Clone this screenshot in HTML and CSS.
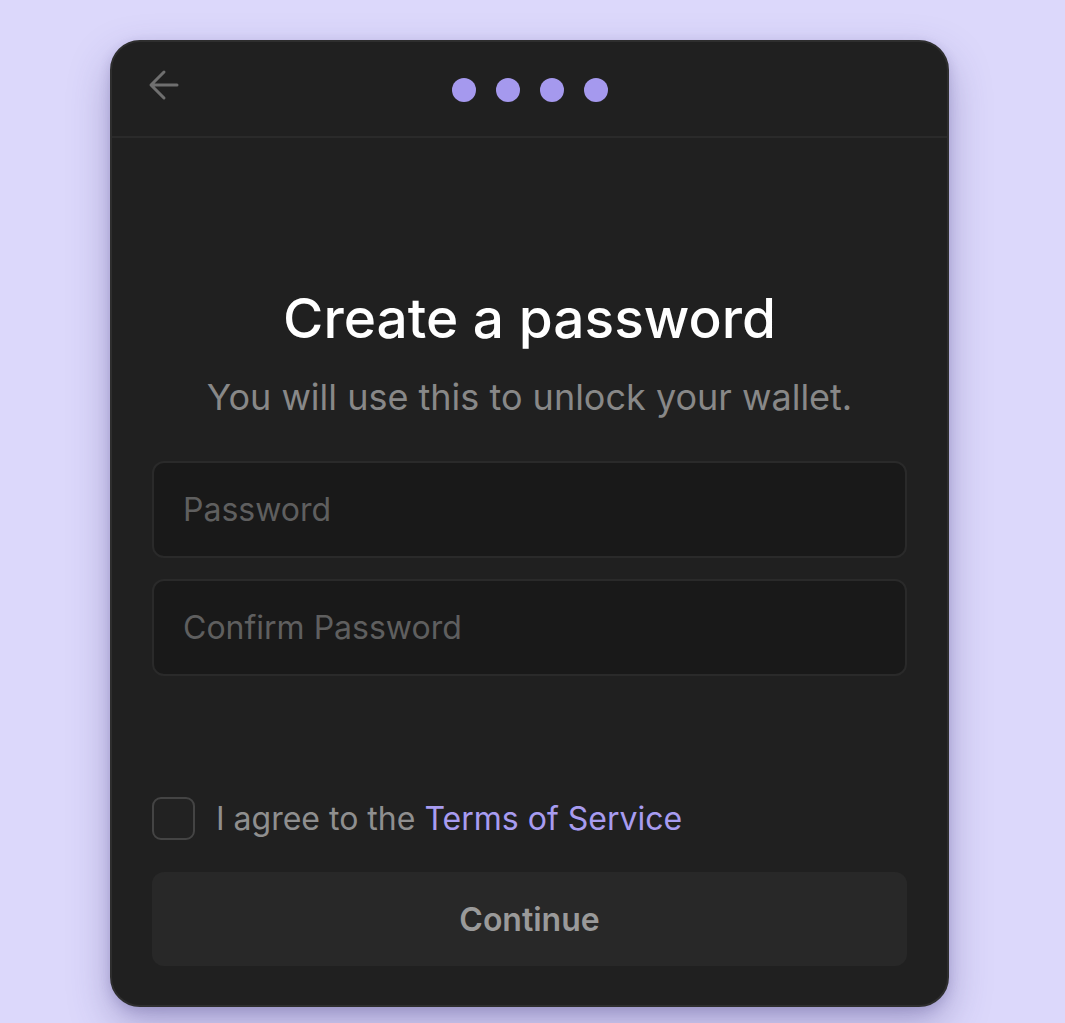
FILE: index.html
```html
<!DOCTYPE html>
<html lang="en">
<head>
<meta charset="utf-8">
<title>Create a password</title>
<link rel="stylesheet" href="styles.css">
</head>
<body>
<div class="card">
  <div class="header">
    <button class="back" aria-label="Back">
      <svg width="32" height="32" viewBox="0 0 32 32" fill="none" stroke="currentColor" stroke-width="3" stroke-linecap="round" stroke-linejoin="round">
        <path d="M29 16H3.5M16 3L3 16L16 29"/>
      </svg>
    </button>
    <div class="dots">
      <span class="dot"></span><span class="dot"></span><span class="dot"></span><span class="dot"></span>
    </div>
  </div>
  <div class="content">
    <h1 class="title">Create a password</h1>
    <p class="subtitle">You will use this to unlock your wallet.</p>
    <div class="fields">
      <input class="field" type="password" placeholder="Password">
      <input class="field" type="password" placeholder="Confirm Password">
    </div>
    <div class="footer">
      <label class="agree">
        <span class="checkbox"></span>
        <span class="agree-text">I agree to the <a class="link" href="#">Terms of Service</a></span>
      </label>
      <button class="continue">Continue</button>
    </div>
  </div>
</div>
</body>
</html>
```

FILE: styles.css
```css
* { box-sizing: border-box; }
html, body { margin: 0; padding: 0; }
body {
  background: #dcd8fb;
  font-family: Inter, "Noto Sans", sans-serif;
  width: 1065px;
  height: 1023px;
  overflow: hidden;
  padding: 40px 0 0 110px;
}
.card {
  width: 839px;
  height: 967px;
  background: #202020;
  border: 2px solid #2e2e2e;
  border-radius: 30px;
  box-shadow: 0 18px 40px rgba(70, 60, 130, 0.35), 0 4px 12px rgba(70, 60, 130, 0.2);
  display: flex;
  flex-direction: column;
  overflow: hidden;
}
.header {
  position: relative;
  height: 96px;
  border-bottom: 2px solid #2a2a2a;
  display: flex;
  align-items: center;
  justify-content: center;
  flex-shrink: 0;
}
.back {
  position: absolute;
  left: 36px;
  top: 27px;
  width: 32px;
  height: 32px;
  padding: 0;
  border: 0;
  background: none;
  color: #6f6f6f;
  display: flex;
}
.dots {
  display: flex;
  gap: 20px;
  margin-top: 2px;
}
.dot {
  width: 24px;
  height: 24px;
  border-radius: 50%;
  background: #a599ee;
}
.content {
  flex: 1;
  display: flex;
  flex-direction: column;
  padding: 0 40px 39px;
}
.title {
  margin: 148px 0 0;
  text-align: center;
  color: #ffffff;
  font-size: 55px;
  font-weight: 500;
  line-height: 64px;
}
.subtitle {
  margin: 25px 0 0;
  text-align: center;
  color: #888888;
  font-size: 36px;
  line-height: 44px;
}
.fields {
  margin-top: 42px;
  display: flex;
  flex-direction: column;
  gap: 21px;
}
.field {
  height: 97px;
  width: 100%;
  background: #191919;
  border: 2px solid #2a2a2a;
  border-radius: 12px;
  padding: 0 29px;
  font-family: inherit;
  font-size: 32px;
  color: #ddd;
  outline: none;
}
.field::placeholder { color: #5f5f5f; }
.footer {
  margin-top: auto;
  display: flex;
  flex-direction: column;
  gap: 32px;
}
.agree {
  display: flex;
  align-items: center;
  gap: 21px;
}
.checkbox {
  width: 43px;
  height: 43px;
  border: 2px solid #444;
  border-radius: 9px;
  background: #222;
}
.agree-text {
  font-size: 32px;
  line-height: 43px;
  color: #8f8f8f;
}
.link { color: #a89cf0; text-decoration: none; }
.continue {
  height: 94px;
  width: 100%;
  border: 0;
  border-radius: 12px;
  background: #282828;
  color: #9a9a9a;
  font-family: inherit;
  font-size: 32px;
  font-weight: 600;
}
```
